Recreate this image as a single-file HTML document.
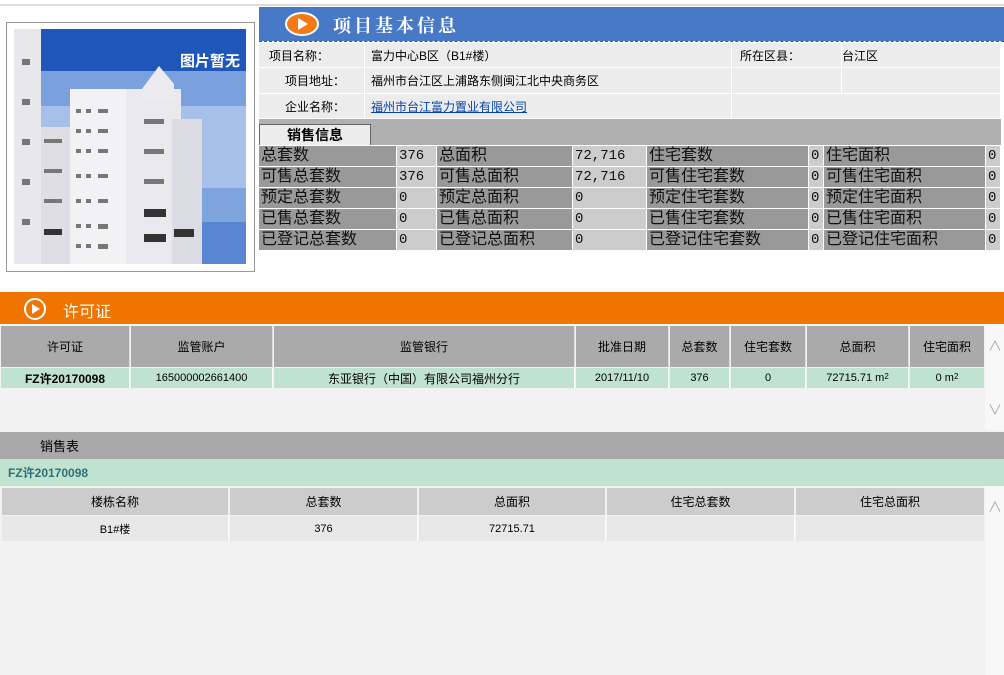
<!DOCTYPE html>
<html><head><meta charset="utf-8"><style>
*{margin:0;padding:0;box-sizing:border-box}
body{width:1004px;height:675px;background:#fff;position:relative;overflow:hidden;font-family:"Liberation Sans","SimSun","Noto Sans CJK SC",sans-serif;font-size:12px;color:#000}
.a{position:absolute}
.c{position:absolute;display:flex;align-items:center}
.ctr{justify-content:center}
.info div{position:absolute;background:#ececec;display:flex;align-items:center;font-size:12px}
.st div{position:absolute;height:20px;display:flex;align-items:center;font-size:16px;color:#111;padding-left:2px;line-height:20px}
.d{background:#999}.l{background:#ccc;font-family:"Liberation Mono",monospace;font-size:14px!important}
sup{font-size:8px;line-height:0;position:relative;top:-1px}
</style></head><body>
<div class="a" style="left:0;top:4px;width:1004px;height:2px;background:#ddd"></div>
<div class="a" style="left:6px;top:22px;width:249px;height:250px;border:1px solid #999;background:#fff"></div>
<svg class="a" style="left:14px;top:29px" width="232" height="235" viewBox="0 0 232 235">
<rect width="232" height="235" fill="#6f98d8"/>
<rect width="232" height="42" fill="#1f56b9"/>
<rect y="42" width="232" height="35" fill="#7aa1de"/>
<rect y="77" width="232" height="82" fill="#a6c0ea"/>
<rect y="159" width="232" height="34" fill="#7fa3dc"/>
<rect y="193" width="232" height="42" fill="#5a85d2"/>
<rect x="0" y="0" width="27" height="235" fill="#e8e8ec"/>
<rect x="27" y="98" width="30" height="137" fill="#dedee4"/>
<rect x="56" y="60" width="60" height="175" fill="#f2f2f4"/>
<rect x="112" y="60" width="55" height="175" fill="#e9e9ee"/>
<polygon points="128,60 145,37 160,55 160,70 128,70" fill="#ececf0"/>
<rect x="158" y="90" width="30" height="145" fill="#dcdde4"/>
<g fill="#777">
<rect x="62" y="80" width="5" height="4"/><rect x="72" y="80" width="5" height="4"/><rect x="84" y="80" width="10" height="4"/>
<rect x="62" y="100" width="5" height="4"/><rect x="72" y="100" width="5" height="4"/><rect x="84" y="100" width="10" height="4"/>
<rect x="62" y="120" width="5" height="4"/><rect x="72" y="120" width="5" height="4"/><rect x="84" y="120" width="10" height="4"/>
<rect x="62" y="145" width="5" height="4"/><rect x="72" y="145" width="5" height="4"/><rect x="84" y="145" width="10" height="4"/>
<rect x="62" y="170" width="5" height="4"/><rect x="72" y="170" width="5" height="4"/><rect x="84" y="170" width="10" height="4"/>
<rect x="62" y="195" width="5" height="4"/><rect x="72" y="195" width="5" height="4"/><rect x="84" y="195" width="10" height="5"/>
<rect x="62" y="215" width="5" height="4"/><rect x="72" y="215" width="5" height="4"/><rect x="84" y="215" width="10" height="5"/>
<rect x="130" y="90" width="20" height="5"/><rect x="130" y="120" width="20" height="5"/><rect x="130" y="150" width="20" height="5"/>
<rect x="130" y="180" width="22" height="8" fill="#333"/><rect x="130" y="205" width="22" height="8" fill="#333"/><rect x="160" y="200" width="20" height="8" fill="#333"/>
<rect x="30" y="110" width="18" height="4"/><rect x="30" y="140" width="18" height="4"/><rect x="30" y="170" width="18" height="4"/><rect x="30" y="200" width="18" height="6" fill="#333"/>
<rect x="8" y="30" width="8" height="6"/><rect x="8" y="70" width="8" height="6"/><rect x="8" y="110" width="8" height="6"/><rect x="8" y="150" width="8" height="6"/><rect x="8" y="190" width="8" height="6"/>
</g>
<text x="226" y="37" text-anchor="end" fill="#fff" font-size="15" font-weight="bold" font-family="Noto Sans CJK SC,sans-serif">图片暂无</text>
</svg>
<div class="a" style="left:259px;top:7px;width:745px;height:34px;background:#4779c7"></div>
<svg class="a" style="left:285px;top:12px" width="34" height="24"><ellipse cx="17" cy="12" rx="16" ry="11" fill="#f37a14" stroke="#fff" stroke-width="2"/><polygon points="13,6 23,12 13,18" fill="#fff"/></svg>
<div class="a" style="left:333px;top:12px;font-size:18px;font-weight:bold;color:#fff;letter-spacing:3px;font-family:'Noto Serif CJK SC',serif">项目基本信息</div>
<div class="a" style="left:259px;top:41px;width:745px;border-top:1px dashed #555"></div>
<div class="info">
<div style="left:259px;top:43px;width:105px;height:24px;padding-left:10px">项目名称：</div>
<div style="left:365px;top:43px;width:366px;height:24px;padding-left:6px">富力中心B区（B1#楼）</div>
<div style="left:732px;top:43px;width:109px;height:24px;padding-left:8px">所在区县：</div>
<div style="left:842px;top:43px;width:158px;height:24px;padding-left:0">台江区</div>
<div style="left:259px;top:68px;width:105px;height:25px;padding-left:26px">项目地址：</div>
<div style="left:365px;top:68px;width:366px;height:25px;padding-left:6px">福州市台江区上浦路东侧闽江北中央商务区</div>
<div style="left:732px;top:68px;width:109px;height:25px"></div>
<div style="left:842px;top:68px;width:158px;height:25px"></div>
<div style="left:259px;top:94px;width:105px;height:24px;padding-left:26px">企业名称：</div>
<div style="left:365px;top:94px;width:366px;height:24px;padding-left:6px;color:#0645ad;text-decoration:underline">福州市台江富力置业有限公司</div>
<div style="left:732px;top:94px;width:268px;height:24px"></div>
</div>
<div class="a" style="left:259px;top:119px;width:742px;height:26px;background:#b0b0b0"></div>
<div class="c ctr" style="left:259px;top:124px;width:112px;height:21px;background:#ececec;border:1px solid #666;border-bottom:none;font-weight:bold;font-size:14px">销售信息</div>
<div class="st">
<div class="d" style="left:259px;top:146px;width:137px">总套数</div><div class="l" style="left:397px;top:146px;width:39px">376</div><div class="d" style="left:437px;top:146px;width:135px">总面积</div><div class="l" style="left:573px;top:146px;width:73px">72,716</div><div class="d" style="left:647px;top:146px;width:161px">住宅套数</div><div class="l" style="left:809px;top:146px;width:14px">0</div><div class="d" style="left:824px;top:146px;width:161px">住宅面积</div><div class="l" style="left:986px;top:146px;width:14px">0</div>
<div class="d" style="left:259px;top:167px;width:137px">可售总套数</div><div class="l" style="left:397px;top:167px;width:39px">376</div><div class="d" style="left:437px;top:167px;width:135px">可售总面积</div><div class="l" style="left:573px;top:167px;width:73px">72,716</div><div class="d" style="left:647px;top:167px;width:161px">可售住宅套数</div><div class="l" style="left:809px;top:167px;width:14px">0</div><div class="d" style="left:824px;top:167px;width:161px">可售住宅面积</div><div class="l" style="left:986px;top:167px;width:14px">0</div>
<div class="d" style="left:259px;top:188px;width:137px">预定总套数</div><div class="l" style="left:397px;top:188px;width:39px">0</div><div class="d" style="left:437px;top:188px;width:135px">预定总面积</div><div class="l" style="left:573px;top:188px;width:73px">0</div><div class="d" style="left:647px;top:188px;width:161px">预定住宅套数</div><div class="l" style="left:809px;top:188px;width:14px">0</div><div class="d" style="left:824px;top:188px;width:161px">预定住宅面积</div><div class="l" style="left:986px;top:188px;width:14px">0</div>
<div class="d" style="left:259px;top:209px;width:137px">已售总套数</div><div class="l" style="left:397px;top:209px;width:39px">0</div><div class="d" style="left:437px;top:209px;width:135px">已售总面积</div><div class="l" style="left:573px;top:209px;width:73px">0</div><div class="d" style="left:647px;top:209px;width:161px">已售住宅套数</div><div class="l" style="left:809px;top:209px;width:14px">0</div><div class="d" style="left:824px;top:209px;width:161px">已售住宅面积</div><div class="l" style="left:986px;top:209px;width:14px">0</div>
<div class="d" style="left:259px;top:230px;width:137px">已登记总套数</div><div class="l" style="left:397px;top:230px;width:39px">0</div><div class="d" style="left:437px;top:230px;width:135px">已登记总面积</div><div class="l" style="left:573px;top:230px;width:73px">0</div><div class="d" style="left:647px;top:230px;width:161px">已登记住宅套数</div><div class="l" style="left:809px;top:230px;width:14px">0</div><div class="d" style="left:824px;top:230px;width:161px">已登记住宅面积</div><div class="l" style="left:986px;top:230px;width:14px">0</div>
</div>
<div class="a" style="left:0;top:292px;width:1004px;height:32px;background:#f07400"></div>
<svg class="a" style="left:23px;top:297px" width="24" height="24"><circle cx="12" cy="12" r="10" fill="none" stroke="#fff" stroke-width="2"/><polygon points="9,7 17,12 9,17" fill="#fff"/></svg>
<div class="a" style="left:63px;top:298px;font-size:16px;color:#fff">许可证</div>
<div class="a" style="left:0;top:325px;width:1004px;height:350px;background:#f2f2f2"></div>
<div class="a" style="left:985px;top:325px;width:19px;height:105px;background:#f8f8f8"></div>
<div class="a" style="left:988px;top:336px;color:#aaa;font-size:14px">&#8743;</div>
<div class="a" style="left:988px;top:400px;color:#aaa;font-size:14px">&#8744;</div>
<div class="c ctr" style="left:1px;top:326px;width:129px;height:41px;background:#aaa;border-right:1px solid #ddd">许可证</div>
<div class="c ctr" style="left:131px;top:326px;width:142px;height:41px;background:#aaa;border-right:1px solid #ddd">监管账户</div>
<div class="c ctr" style="left:274px;top:326px;width:301px;height:41px;background:#aaa;border-right:1px solid #ddd">监管银行</div>
<div class="c ctr" style="left:576px;top:326px;width:93px;height:41px;background:#aaa;border-right:1px solid #ddd">批准日期</div>
<div class="c ctr" style="left:670px;top:326px;width:60px;height:41px;background:#aaa;border-right:1px solid #ddd">总套数</div>
<div class="c ctr" style="left:731px;top:326px;width:75px;height:41px;background:#aaa;border-right:1px solid #ddd">住宅套数</div>
<div class="c ctr" style="left:807px;top:326px;width:102px;height:41px;background:#aaa;border-right:1px solid #ddd">总面积</div>
<div class="c ctr" style="left:910px;top:326px;width:74px;height:41px;background:#aaa">住宅面积</div>
<div class="c ctr" style="left:1px;top:368px;width:129px;height:20px;background:#c0e2d0;font-weight:bold;border-right:1px solid #fff">FZ许20170098</div>
<div class="c ctr" style="left:131px;top:368px;width:142px;height:20px;background:#c0e2d0;font-size:11px;border-right:1px solid #fff">165000002661400</div>
<div class="c ctr" style="left:274px;top:368px;width:301px;height:20px;background:#c0e2d0;border-right:1px solid #fff">东亚银行（中国）有限公司福州分行</div>
<div class="c ctr" style="left:576px;top:368px;width:93px;height:20px;background:#c0e2d0;font-size:11px;border-right:1px solid #fff">2017/11/10</div>
<div class="c ctr" style="left:670px;top:368px;width:60px;height:20px;background:#c0e2d0;font-size:11px;border-right:1px solid #fff">376</div>
<div class="c ctr" style="left:731px;top:368px;width:75px;height:20px;background:#c0e2d0;font-size:11px;border-right:1px solid #fff">0</div>
<div class="c ctr" style="left:807px;top:368px;width:102px;height:20px;background:#c0e2d0;font-size:11px;border-right:1px solid #fff">72715.71&nbsp;m<sup>2</sup></div>
<div class="c ctr" style="left:910px;top:368px;width:74px;height:20px;background:#c0e2d0;font-size:11px">0&nbsp;m<sup>2</sup></div>
<div class="c" style="left:0;top:432px;width:1004px;height:27px;background:#a9a9a9;padding-left:40px;font-size:13px">销售表</div>
<div class="c" style="left:0;top:459px;width:1004px;height:27px;background:#c0e2d0;padding-left:8px;font-weight:bold;color:#2f6f78;font-size:12px">FZ许20170098</div>
<div class="c ctr" style="left:2px;top:488px;width:227px;height:27px;background:#ccc;border-right:1px solid #eee">楼栋名称</div>
<div class="c ctr" style="left:230px;top:488px;width:188px;height:27px;background:#ccc;border-right:1px solid #eee">总套数</div>
<div class="c ctr" style="left:419px;top:488px;width:187px;height:27px;background:#ccc;border-right:1px solid #eee">总面积</div>
<div class="c ctr" style="left:607px;top:488px;width:188px;height:27px;background:#ccc;border-right:1px solid #eee">住宅总套数</div>
<div class="c ctr" style="left:796px;top:488px;width:188px;height:27px;background:#ccc">住宅总面积</div>
<div class="c ctr" style="left:2px;top:516px;width:227px;height:25px;background:#e8e8e8;border-right:1px solid #fff;font-size:11px">B1#楼</div>
<div class="c ctr" style="left:230px;top:516px;width:188px;height:25px;background:#e8e8e8;border-right:1px solid #fff;font-size:11px">376</div>
<div class="c ctr" style="left:419px;top:516px;width:187px;height:25px;background:#e8e8e8;border-right:1px solid #fff;font-size:11px">72715.71</div>
<div class="c ctr" style="left:607px;top:516px;width:188px;height:25px;background:#e8e8e8;border-right:1px solid #fff"></div>
<div class="c ctr" style="left:796px;top:516px;width:188px;height:25px;background:#e8e8e8"></div>
<div class="a" style="left:985px;top:487px;width:19px;height:188px;background:#f8f8f8"></div>
<div class="a" style="left:988px;top:497px;color:#aaa;font-size:14px">&#8743;</div>
</body></html>
